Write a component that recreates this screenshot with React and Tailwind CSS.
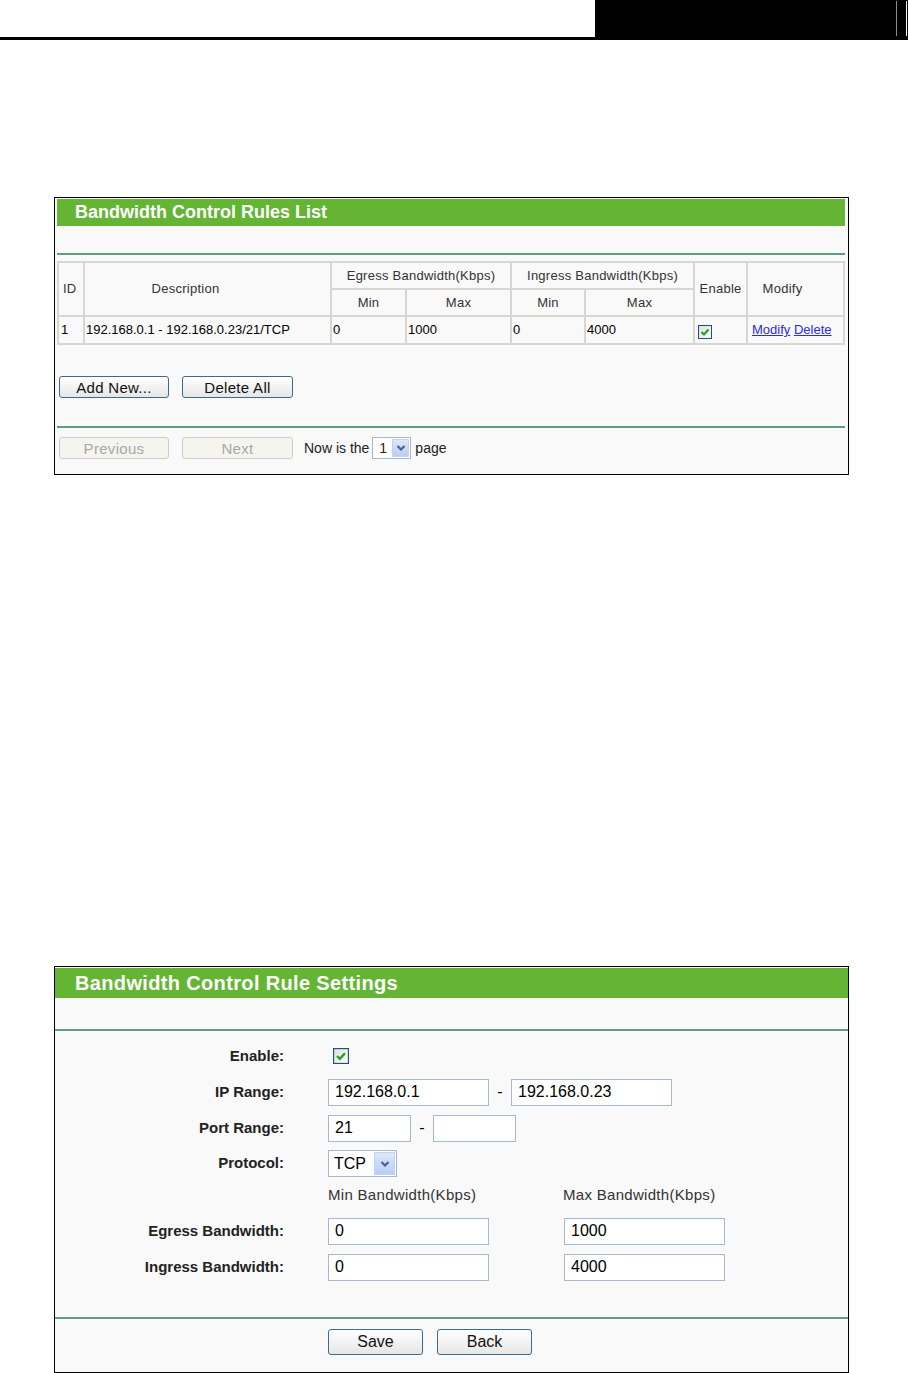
import React from 'react';

// little ticked checkbox, drawn the way the old IE theme draws it
const Check = ({ className }) => (
  <svg viewBox="0 0 14 14" className={className}>
    <defs>
      <linearGradient id="cbg" x1="0" y1="0" x2="1" y2="1">
        <stop offset="0" stopColor="#dcdcd6" />
        <stop offset="1" stopColor="#ffffff" />
      </linearGradient>
    </defs>
    <rect x="0.5" y="0.5" width="13" height="13" fill="url(#cbg)" stroke="#1c5180" />
    <path d="M3.5 7 L6 9.5 L10.5 4.5" fill="none" stroke="#21a121" strokeWidth="2" />
  </svg>
);

const Arrow = ({ className }) => (
  <div className={`flex items-center justify-center bg-linear-to-b from-[#dde8fb] to-[#b7cdf2] border border-[#c3d3ef] ${className}`}>
    <svg viewBox="0 0 10 8" className="w-[10px] h-[8px]">
      <path d="M1.5 2 L5 5.5 L8.5 2" fill="none" stroke="#4d6185" strokeWidth="2.2" />
    </svg>
  </div>
);

const Btn = ({ children, className, disabled }) => (
  <button
    className={
      disabled
        ? `rounded-[3px] border border-[#cfcdbf] bg-[#f5f4ef] text-[#a8a8a8] leading-none ${className}`
        : `rounded-[3px] border border-[#3d6a8e] bg-linear-to-b from-white to-[#e6e6e6] text-[#111] leading-none ${className}`
    }
  >
    {children}
  </button>
);

const Field = ({ value, className }) => (
  <div className={`h-[27px] border border-[#a6b8cc] bg-white flex items-center pl-[6px] text-[16px] text-black ${className}`}>
    {value}
  </div>
);

const Label = ({ children }) => (
  <div className="w-[230px] text-right font-bold text-[15px] text-[#222] pr-[1px]">{children}</div>
);

const th = 'border-2 border-[#d8d6d0] font-normal text-[13px] tracking-[0.25px] text-[#333] text-center';
const td = 'border-2 border-[#d8d6d0] text-[13px] text-black text-left pl-[1px]';

export default function App() {
  return (
    <div className="w-[908px] min-h-[1373px] bg-white font-['Liberation_Sans',Arial,sans-serif]">
      {/* page header */}
      <div className="flex h-[37px]">
        <div className="flex-1" />
        <div className="w-[313px] bg-black flex">
          <div className="w-[301px]" />
          <div className="w-px bg-[#8a8a8a] my-[1px]" />
          <div className="w-[9px]" />
          <div className="w-px bg-white my-[1px]" />
        </div>
      </div>
      <div className="h-[3px] bg-black" />

      {/* rules list */}
      <div className="mt-[157px] ml-[54px] w-[795px] h-[278px] border border-black bg-[#f9f9f9] pl-[2px] pr-[3px] pt-[1px]">
        <div className="h-[27px] bg-[#64b533] flex items-center pl-[18px] text-white font-bold text-[18px]">
          Bandwidth Control Rules List
        </div>
        <div className="mt-[27px] h-[2px] bg-[#5f9e7d]" />
        <table className="mt-[6px] w-[786px] table-fixed border-collapse">
          <colgroup>
            <col className="w-[26px]" />
            <col className="w-[247px]" />
            <col className="w-[75px]" />
            <col className="w-[105px]" />
            <col className="w-[74px]" />
            <col className="w-[109px]" />
            <col className="w-[53px]" />
            <col className="w-[97px]" />
          </colgroup>
          <thead>
            <tr className="h-[27px]">
              <th rowSpan={2} className={`${th} text-left pl-[4px]`}>ID</th>
              <th rowSpan={2} className={`${th} pr-[44px]`}>Description</th>
              <th colSpan={2} className={th}>Egress Bandwidth(Kbps)</th>
              <th colSpan={2} className={th}>Ingress Bandwidth(Kbps)</th>
              <th rowSpan={2} className={th}>Enable</th>
              <th rowSpan={2} className={`${th} pr-[26px]`}>Modify</th>
            </tr>
            <tr className="h-[27px]">
              <th className={th}>Min</th>
              <th className={th}>Max</th>
              <th className={th}>Min</th>
              <th className={th}>Max</th>
            </tr>
          </thead>
          <tbody>
            <tr className="h-[28px]">
              <td className={`${td} pl-[2px]`}>1</td>
              <td className={td}>192.168.0.1 - 192.168.0.23/21/TCP</td>
              <td className={td}>0</td>
              <td className={td}>1000</td>
              <td className={td}>0</td>
              <td className={td}>4000</td>
              <td className={`${td} pl-[3px]`}>
                <Check className="w-[14px] h-[14px] mt-[3px]" />
              </td>
              <td className={`${td} pl-[4px]`}>
                <span className="text-[#2a2aee] underline">Modify</span>{' '}
                <span className="text-[#2a2aee] underline">Delete</span>
              </td>
            </tr>
          </tbody>
        </table>

        <div className="mt-[31px] ml-[2px] flex gap-[13px]">
          <Btn className="w-[110px] h-[22px] text-[15px] tracking-[0.3px]">Add New...</Btn>
          <Btn className="w-[111px] h-[22px] text-[15px] tracking-[0.3px]">Delete All</Btn>
        </div>

        <div className="mt-[28px] h-[2px] bg-[#5f9e7d]" />

        <div className="mt-[9px] ml-[2px] flex items-center text-[14px] text-[#222]">
          <Btn disabled className="w-[110px] h-[22px] text-[15px] tracking-[0.3px]">Previous</Btn>
          <Btn disabled className="ml-[13px] w-[111px] h-[22px] text-[15px] tracking-[0.3px]">Next</Btn>
          <span className="ml-[11px]">Now is the</span>
          <div className="ml-[3px] w-[39px] h-[22px] border border-[#a6b8cc] bg-white flex items-center justify-between pl-[6px] pr-px">
            <span>1</span>
            <Arrow className="w-[17px] h-[18px]" />
          </div>
          <span className="ml-[4px]">page</span>
        </div>
      </div>

      {/* rule settings */}
      <div className="mt-[491px] ml-[54px] w-[795px] h-[407px] border border-black bg-[#f9f9f9] pt-px">
        <div className="h-[30px] bg-[#64b533] flex items-center pl-[20px] text-white font-bold text-[20px] tracking-[0.35px]">
          Bandwidth Control Rule Settings
        </div>
        <div className="mt-[31px] h-[2px] bg-[#5f9e7d]" />

        <div className="pt-[7px]">
          <div className="h-[36px] flex items-center gap-[43px]">
            <Label>Enable:</Label>
            <Check className="ml-[5px] w-[16px] h-[16px]" />
          </div>
          <div className="h-[36px] flex items-center gap-[43px]">
            <Label>IP Range:</Label>
            <div className="flex items-center">
              <Field value="192.168.0.1" className="w-[161px]" />
              <span className="w-[22px] text-center text-[16px]">-</span>
              <Field value="192.168.0.23" className="w-[161px]" />
            </div>
          </div>
          <div className="h-[36px] flex items-center gap-[43px]">
            <Label>Port Range:</Label>
            <div className="flex items-center">
              <Field value="21" className="w-[83px]" />
              <span className="w-[22px] text-center text-[16px]">-</span>
              <Field value="" className="w-[83px]" />
            </div>
          </div>
          <div className="h-[35px] flex items-center gap-[43px]">
            <Label>Protocol:</Label>
            <div className="w-[69px] h-[27px] border border-[#a6b8cc] bg-white flex items-center justify-between pl-[5px] pr-px text-[16px]">
              <span>TCP</span>
              <Arrow className="w-[21px] h-[23px]" />
            </div>
          </div>
          <div className="h-[32px] flex items-center gap-[43px] pb-[4px]">
            <div className="w-[230px]" />
            <div className="flex text-[15px] tracking-[0.3px] text-[#333]">
              <span className="w-[235px]">Min Bandwidth(Kbps)</span>
              <span>Max Bandwidth(Kbps)</span>
            </div>
          </div>
          <div className="h-[36px] flex items-center gap-[43px]">
            <Label>Egress Bandwidth:</Label>
            <div className="flex items-center">
              <Field value="0" className="w-[161px]" />
              <Field value="1000" className="ml-[75px] w-[161px]" />
            </div>
          </div>
          <div className="h-[36px] flex items-center gap-[43px]">
            <Label>Ingress Bandwidth:</Label>
            <div className="flex items-center">
              <Field value="0" className="w-[161px]" />
              <Field value="4000" className="ml-[75px] w-[161px]" />
            </div>
          </div>
        </div>

        <div className="mt-[32px] h-[2px] bg-[#5f9e7d]" />
        <div className="mt-[10px] flex gap-[14px] pl-[273px]">
          <Btn className="w-[95px] h-[26px] text-[16px]">Save</Btn>
          <Btn className="w-[95px] h-[26px] text-[16px]">Back</Btn>
        </div>
      </div>
    </div>
  );
}
